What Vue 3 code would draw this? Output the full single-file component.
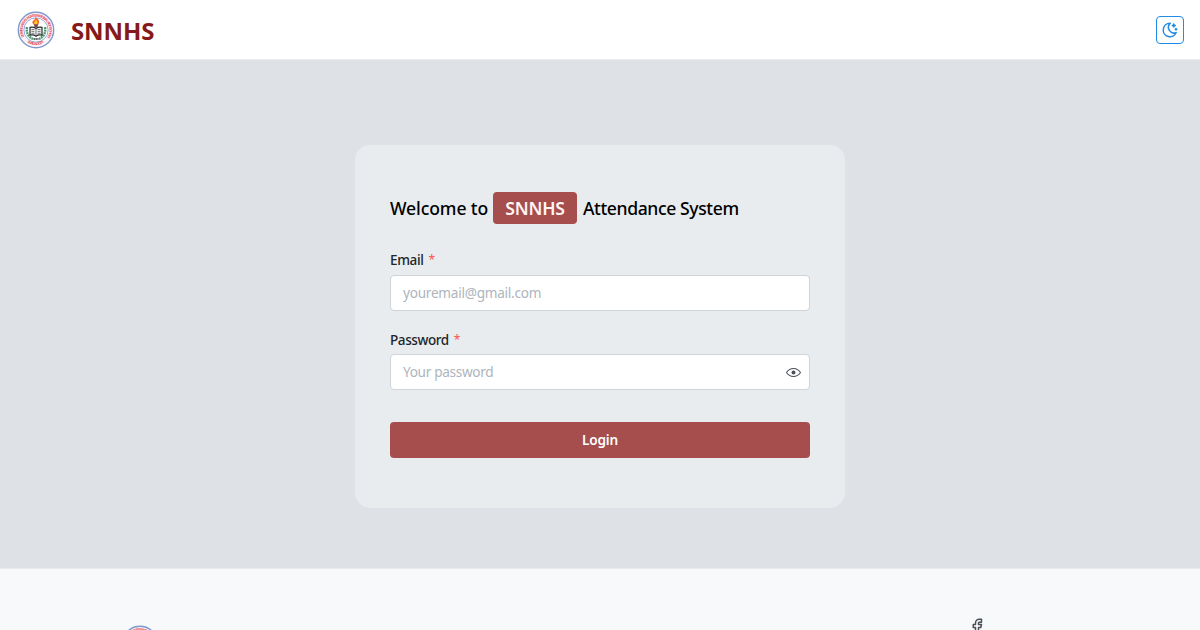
<script setup>
import { ref } from 'vue'
const email = ref('')
const password = ref('')
</script>

<template>
  <div class="page">
    <svg class="defs" width="0" height="0" aria-hidden="true">
      <symbol id="school-seal" class="seal-symbol" viewBox="0 0 38 38" overflow="visible">
        <defs>
          <path id="seal-top" d="M7.4 25.8A13.4 13.4 0 1 1 30.6 25.8" />
          <path id="seal-bottom" d="M7.7 29.2A15.7 15.7 0 0 0 30.3 29.2" />
        </defs>
        <circle cx="19" cy="19" r="17.7" fill="#fff5f6" stroke="#7e9bd0" stroke-width="1.4" />
        <circle cx="19" cy="19" r="12.1" fill="#fff" stroke="#83a1d2" stroke-width=".9" />
        <text class="seal-text"><textPath href="#seal-top" textLength="58">DOMINGAS DEL NORTE NATIONAL HIGH SCHOOL</textPath></text>
        <text class="seal-text"><textPath href="#seal-bottom" startOffset="12%" textLength="18">SURIGAO CITY</textPath></text>
        <path d="M10 16Q8.5 24.5 16 28M28 16Q29.5 24.5 22 28" fill="none" stroke="#4c976b" stroke-width="2.4" stroke-dasharray="2 .6" />
        <path d="M13 16.4q3.5-.8 6 1 2.5-1.8 6-1v7.8q-3.5-.8-6 1-2.5-1.8-6-1z" fill="#eceeed" stroke="#292f30" stroke-width="1.2" />
        <path d="M19 16v9M14.5 18.5h2.8M14.5 20.4h2.8M14.5 22.3h2.8M20.7 18.5h2.8M20.7 20.4h2.8M20.7 22.3h2.8" stroke="#4d5153" stroke-width=".7" />
        <path d="M16.7 13h4.6l-1 3.5h-2.6z" fill="#695348" />
        <path d="M18.8 6.5q5 3 2.6 6.9h-4.7q-3-2.4.7-4.6z" fill="#f1652b" />
        <path d="M19 8.8q2.6 2.2 1 4.3h-2.5q-1.2-1.7 1.5-4.3" fill="#ffc52e" />
        <path d="M16.5 28h5" stroke="#5d656b" stroke-width="1.8" stroke-dasharray="1.5 .4" />
      </symbol>
    </svg>

    <header class="header">
      <div class="brand">
        <svg class="seal"><use href="#school-seal" /></svg>
        <span class="brand-name">SNNHS</span>
      </div>
      <button class="theme" aria-label="Toggle theme">
        <svg class="line-icon" width="18" height="18" viewBox="0 0 24 24">
          <path d="M12 3c.132 0 .263 0 .393 0a7.5 7.5 0 0 0 7.92 12.446a9 9 0 1 1-8.313-12.454z" />
          <path d="M17 4a2 2 0 0 0 2 2a2 2 0 0 0-2 2a2 2 0 0 0-2-2a2 2 0 0 0 2-2" />
          <path d="M19 11h2m-1-1v2" />
        </svg>
      </button>
    </header>

    <main class="main">
      <form class="card" @submit.prevent>
        <h1 class="heading"><span class="welcome">Welcome to</span><span class="mark"><span>SNNHS</span></span><span class="system">Attendance System</span></h1>
        <div class="field">
          <label for="email"><span class="label-email">Email</span><i>*</i></label>
          <div class="control"><input id="email" v-model="email" class="email" placeholder="youremail@gmail.com" /></div>
        </div>
        <div class="field second">
          <label for="password"><span class="label-password">Password</span><i>*</i></label>
          <div class="control">
            <input id="password" v-model="password" class="password" type="password" placeholder="Your password" />
            <svg width="15" height="15" viewBox="0 0 15 15" fill="#495057">
              <path fill-rule="evenodd" d="M7.5 11C4.803 11 2.53 9.622 1.096 7.5C2.53 5.378 4.803 4 7.5 4C10.197 4 12.47 5.378 13.904 7.5C12.47 9.622 10.197 11 7.5 11ZM7.5 3C4.308 3 1.656 4.706.076 7.235C-.025 7.397-.025 7.603.076 7.765C1.656 10.294 4.308 12 7.5 12C10.692 12 13.344 10.294 14.924 7.765C15.025 7.603 15.025 7.397 14.924 7.235C13.344 4.706 10.692 3 7.5 3ZM7.5 9.5C8.605 9.5 9.5 8.605 9.5 7.5C9.5 6.395 8.605 5.5 7.5 5.5C6.395 5.5 5.5 6.395 5.5 7.5C5.5 8.605 6.395 9.5 7.5 9.5Z" />
            </svg>
          </div>
        </div>
        <button class="login">Login</button>
      </form>
    </main>

    <footer class="footer">
      <svg class="seal footer-seal"><use href="#school-seal" /></svg>
      <svg class="line-icon facebook" width="18" height="18" viewBox="0 0 24 24">
        <path d="M7 10v4h3v7h4v-7h3l1-4h-4V8a1 1 0 0 1 1-1h3V3h-3a5 5 0 0 0-5 5v2H7" />
      </svg>
    </footer>
  </div>
</template>

<style>
body { margin: 0; overflow: hidden; }
</style>

<style scoped>
* { box-sizing: border-box; }
.page { height: 630px; overflow: hidden; display: flex; flex-direction: column; font-family: "Noto Sans", "Open Sans", sans-serif; color: #212529; background: #dee2e6; }
.defs { position: absolute; overflow: visible; }
.seal-symbol { overflow: visible; }
.header { height: 60px; flex: none; display: flex; align-items: center; justify-content: space-between; padding: 0 16px 0 17px; background: #fff; border-bottom: 1px solid #e9ecef; }
.brand { display: flex; align-items: center; gap: 16px; }
.seal { width: 38px; height: 38px; display: block; overflow: visible; }
.seal-text { font: 700 3.7px "Liberation Sans", sans-serif; fill: #e2455a; }
.brand-name { font-size: 24px; font-weight: 700; line-height: 36px; color: #861919; position: relative; top: 1px; letter-spacing: -.1px; }
.theme { width: 28px; height: 28px; display: grid; place-items: center; border: 1px solid #228be6; border-radius: 4px; padding: 0; background: #fff; color: #228be6; }
.line-icon { display: block; fill: none; stroke: currentColor; stroke-width: 2; stroke-linecap: round; stroke-linejoin: round; }
.main { height: 508px; flex: none; padding-top: 85px; }
.card { width: 490px; height: 363px; margin: 0 auto; padding: 47px 35px 0; border-radius: 15px; background: #e8ecef; }
.heading { height: 32px; margin: 0; display: flex; align-items: center; font-size: 17.6px; font-weight: 500; line-height: 28px; color: #000; white-space: nowrap; }
.welcome { width: 103px; letter-spacing: -.12px; }
.mark { width: 84px; height: 32px; display: grid; place-items: center; margin-right: 6px; border-radius: 4px; background: #a64d4d; color: #fff5f5; font-weight: 600; letter-spacing: -.2px; }
.system { letter-spacing: -.4px; }
.field { margin-top: 25px; }
.second { margin-top: 18px; }
label { display: flex; height: 22px; align-items: center; font-size: 13.5px; font-weight: 500; line-height: 22px; letter-spacing: -.2px; }
label i { margin-left: 5px; color: #fa5252; font-style: normal; font-weight: 400; font-size: 12px; }
.label-email { letter-spacing: -.35px; }
.label-password { letter-spacing: -.4px; }
.control { height: 36px; margin-top: 4px; display: flex; align-items: center; padding: 0 8px 0 12px; border: 1px solid #ced4da; border-radius: 4px; background: #fff; }
.second .control { margin-top: 3px; }
input { flex: 1; min-width: 0; height: 34px; padding: 0 0 1px; border: 0; outline: 0; background: transparent; font: 400 13.6px "Noto Sans", sans-serif; color: #212529; letter-spacing: -.25px; }
.password { letter-spacing: -.32px; }
input::placeholder { color: #adb5bd; opacity: 1; }
.login { display: block; width: 100%; height: 36px; margin-top: 32px; padding: 0 0 1px; border: 0; border-radius: 4px; background: #a64d4d; color: #fff; font: 600 13.6px "Noto Sans", sans-serif; letter-spacing: -.2px; }
.footer { flex: 1; min-height: 62px; display: flex; align-items: flex-start; justify-content: space-between; padding: 48px 214px 0 121px; background: #f8f9fa; border-top: 1px solid #e9ecef; color: #495057; }
.footer-seal { margin-top: 8px; }
</style>
